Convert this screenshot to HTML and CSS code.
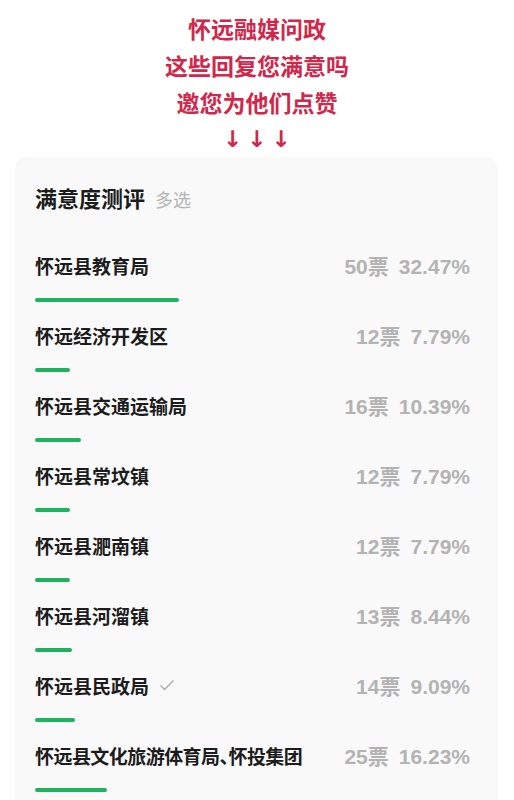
FILE: index.html
```html
<!DOCTYPE html>
<html lang="zh-CN">
<head>
<meta charset="utf-8">
<link rel="stylesheet" href="styles.css">
</head>
<body>
<header class="intro">
  <p>怀远融媒问政</p>
  <p>这些回复您满意吗</p>
  <p>邀您为他们点赞</p>
  <p class="arrows">↓↓↓</p>
</header>
<section class="card">
  <h2 class="title">满意度测评<span class="tag">多选</span></h2>
  <ul class="options">
    <li class="option">
      <div class="line"><span class="name">怀远县教育局</span><span class="stat"><span class="votes">50票</span><span class="pct">32.47%</span></span></div>
      <div class="track"><div class="bar" style="width:32.47%"></div></div>
    </li>
    <li class="option">
      <div class="line"><span class="name">怀远经济开发区</span><span class="stat"><span class="votes">12票</span><span class="pct">7.79%</span></span></div>
      <div class="track"><div class="bar" style="width:7.79%"></div></div>
    </li>
    <li class="option">
      <div class="line"><span class="name">怀远县交通运输局</span><span class="stat"><span class="votes">16票</span><span class="pct">10.39%</span></span></div>
      <div class="track"><div class="bar" style="width:10.39%"></div></div>
    </li>
    <li class="option">
      <div class="line"><span class="name">怀远县常坟镇</span><span class="stat"><span class="votes">12票</span><span class="pct">7.79%</span></span></div>
      <div class="track"><div class="bar" style="width:7.79%"></div></div>
    </li>
    <li class="option">
      <div class="line"><span class="name">怀远县淝南镇</span><span class="stat"><span class="votes">12票</span><span class="pct">7.79%</span></span></div>
      <div class="track"><div class="bar" style="width:7.79%"></div></div>
    </li>
    <li class="option">
      <div class="line"><span class="name">怀远县河溜镇</span><span class="stat"><span class="votes">13票</span><span class="pct">8.44%</span></span></div>
      <div class="track"><div class="bar" style="width:8.44%"></div></div>
    </li>
    <li class="option">
      <div class="line"><span class="name">怀远县民政局<svg class="check" viewBox="0 0 16 12" width="16" height="12"><polyline points="1.5,6.5 5.5,10.5 14.5,1.5" fill="none" stroke="#a8a8a8" stroke-width="1.3"/></svg></span><span class="stat"><span class="votes">14票</span><span class="pct">9.09%</span></span></div>
      <div class="track"><div class="bar" style="width:9.09%"></div></div>
    </li>
    <li class="option">
      <div class="line"><span class="name long">怀远县文化旅游体育局<span class="punct">、</span>怀投集团</span><span class="stat"><span class="votes">25票</span><span class="pct">16.23%</span></span></div>
      <div class="track"><div class="bar" style="width:16.23%"></div></div>
    </li>
  </ul>
</section>
</body>
</html>
```
FILE: styles.css
```css
* { box-sizing: border-box; }
html, body { margin: 0; padding: 0; background: #ffffff; }
body {
  font-family: "Noto Sans CJK SC", "Noto Sans", sans-serif;
  width: 514px;
  height: 800px;
  overflow: hidden;
}
.intro {
  padding-top: 10px;
  text-align: center;
  color: #d2264a;
  font-weight: 700;
  font-size: 23px;
  line-height: 37px;
}
.intro p { margin: 0; }
.intro .arrows {
  font-family: "DejaVu Sans", sans-serif;
  font-size: 23px;
  letter-spacing: 5px;
  padding-left: 5px;
  line-height: 36px;
}
.card {
  margin: 0 16px 0 15px;
  background: #f9f9f9;
  border-radius: 12px;
  padding: 25px 20px 0 20px;
}
.title {
  margin: 0;
  font-size: 22px;
  line-height: 30px;
  font-weight: 700;
  color: #1c1c1c;
  display: flex;
  align-items: baseline;
}
.tag {
  margin-left: 10px;
  font-size: 18px;
  font-weight: 400;
  color: #b4b4b4;
}
.options {
  list-style: none;
  margin: 37px 0 0 0;
  padding: 0;
}
.option {
  padding-bottom: 19px;
}
.line {
  display: flex;
  justify-content: space-between;
  align-items: center;
  height: 28px;
}
.name {
  font-size: 19px;
  font-weight: 700;
  color: #1c1c1c;
  display: flex;
  align-items: center;
  white-space: nowrap;
}
.name.long { letter-spacing: -0.55px; }
.punct {
  font-feature-settings: "halt";
}
.check { margin-left: 10px; }
.stat {
  padding-right: 8px;
  color: #b3b3b3;
  font-family: "Liberation Sans", "Noto Sans CJK SC", sans-serif;
  font-weight: 700;
  font-size: 21px;
  white-space: nowrap;
}
.pct { margin-left: 10px; }
.track {
  margin-top: 19px;
  height: 4px;
}
.bar {
  height: 4px;
  border-radius: 2px;
  background: #1cb25e;
}
```
